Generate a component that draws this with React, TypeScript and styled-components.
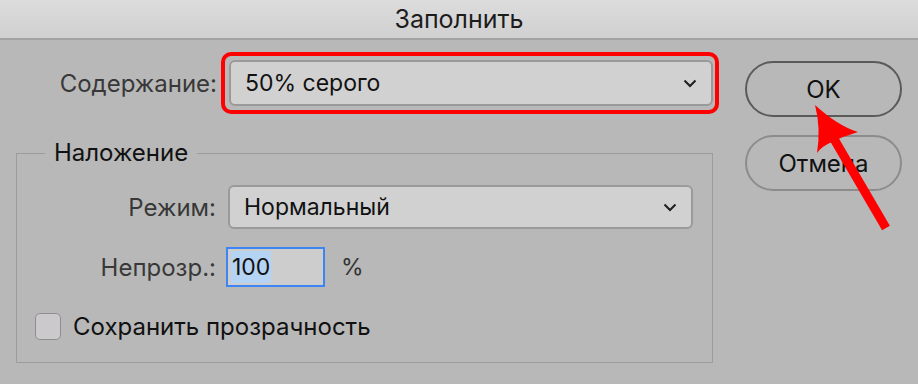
import React from 'react';
import styled, { createGlobalStyle } from 'styled-components';

const Global = createGlobalStyle`
  html, body { margin: 0; padding: 0; background: #b8b8b8; }
  body { font-family: Inter, "Noto Sans", "DejaVu Sans", sans-serif; }
`;

const Dialog = styled.div`
  position: relative;
  width: 918px;
  height: 384px;
  background: #b8b8b8;
  overflow: hidden;
`;

const TitleBar = styled.div`
  height: 38px;
  border-bottom: 2px solid #a3a3a3;
  background: linear-gradient(#dddcdd, #d1d0d1);
  display: flex;
  align-items: center;
  justify-content: center;
  font-size: 25px;
  color: #1c1c1c;
`;

const Body = styled.div`
  display: flex;
  padding: 12px 0 0 16px;
`;

const LeftColumn = styled.div`
  width: 703px;
  display: flex;
  flex-direction: column;
`;

const Row = styled.div<{ $mt?: number }>`
  display: flex;
  align-items: center;
  margin-top: ${(p) => p.$mt ?? 0}px;
`;

const Label = styled.div<{ $w: number; $gap: number }>`
  width: ${(p) => p.$w}px;
  margin-right: ${(p) => p.$gap}px;
  text-align: right;
  font-size: 24px;
  color: #383838;
  white-space: nowrap;
`;

const Highlight = styled.div`
  border: 4px solid #ff0000;
  border-radius: 10px;
  padding: 4px 2px 4px 4px;
  flex: 1;
`;

const Select = styled.div<{ $h: number }>`
  box-sizing: border-box;
  height: ${(p) => p.$h}px;
  background: #d1d1d1;
  border: 2px solid #9a9a9a;
  border-radius: 6px;
  display: flex;
  align-items: center;
  padding: 0 14px 0 14px;
  font-size: 23px;
  color: #111;
  flex: 1;
`;

const SelectText = styled.span`
  flex: 1;
`;

const Chevron = () => (
  <svg width="14" height="9" viewBox="0 0 14 9">
    <path d="M1.5 1.5 L7 7 L12.5 1.5" fill="none" stroke="#1e1e1e" strokeWidth="2" />
  </svg>
);

const Group = styled.fieldset`
  box-sizing: border-box;
  width: 697px;
  height: 224px;
  margin: 25px 0 0 0;
  padding: 0 19px 0 0;
  border: 1.5px solid #9c9c9c;
  min-width: 0;
`;

const Legend = styled.legend`
  margin-left: 28px;
  padding: 0 9px;
  font-size: 24px;
  line-height: 28px;
  color: #111;
`;

const NumberBox = styled.div`
  box-sizing: border-box;
  width: 99px;
  height: 40px;
  border: 2px solid #3d84f4;
  background: #cdcdcd;
  display: flex;
  align-items: center;
  padding-left: 3px;
  font-size: 23px;
  color: #111;
`;

const Selected = styled.span`
  background: #b5d3f3;
  padding: 2px 1px;
`;

const Unit = styled.span`
  margin-left: 16px;
  font-size: 23px;
  color: #333;
`;

const Checkbox = styled.div`
  box-sizing: border-box;
  width: 26px;
  height: 27px;
  margin-left: 18px;
  border: 1.5px solid #8e8e8e;
  border-radius: 5px;
  background: #cbc9cc;
`;

const CheckLabel = styled.span`
  margin-left: 12px;
  font-size: 24px;
  color: #111;
`;

const ButtonColumn = styled.div`
  display: flex;
  flex-direction: column;
  gap: 18px;
  margin: 9px 0 0 26px;
`;

const Button = styled.div<{ $primary?: boolean }>`
  box-sizing: border-box;
  width: 157px;
  height: 56px;
  border-radius: 28px;
  border: 2px solid ${(p) => (p.$primary ? '#5a5a5a' : '#8c8c8c')};
  display: flex;
  align-items: center;
  justify-content: center;
  font-size: 24px;
  color: #111;
`;

const ArrowOverlay = styled.svg`
  position: absolute;
  left: 0;
  top: 0;
  pointer-events: none;
`;

export default function App() {
  return (
    <Dialog>
      <Global />
      <TitleBar>Заполнить</TitleBar>
      <Body>
        <LeftColumn>
          <Row>
            <Label $w={201} $gap={4}>Содержание:</Label>
            <Highlight>
              <Select $h={46}>
                <SelectText>50% серого</SelectText>
                <Chevron />
              </Select>
            </Highlight>
          </Row>
          <Group>
            <Legend>Наложение</Legend>
            <Row $mt={18}>
              <Label $w={199} $gap={12}>Режим:</Label>
              <Select $h={44}>
                <SelectText>Нормальный</SelectText>
                <Chevron />
              </Select>
            </Row>
            <Row $mt={18}>
              <Label $w={199} $gap={10}>Непрозр.:</Label>
              <NumberBox>
                <Selected>100</Selected>
              </NumberBox>
              <Unit>%</Unit>
            </Row>
            <Row $mt={25}>
              <Checkbox />
              <CheckLabel>Сохранить прозрачность</CheckLabel>
            </Row>
          </Group>
        </LeftColumn>
        <ButtonColumn>
          <Button $primary>OK</Button>
          <Button>Отмена</Button>
        </ButtonColumn>
      </Body>
      <ArrowOverlay width="918" height="384" viewBox="0 0 918 384">
        <line x1="886" y1="228" x2="834" y2="139" stroke="#ff0000" strokeWidth="9" />
        <path d="M815 105 Q838 126 858 132 L843 137 L832 142 Q822 146 817 153 Q821 128 815 105 Z" fill="#ff0000" />
      </ArrowOverlay>
    </Dialog>
  );
}
